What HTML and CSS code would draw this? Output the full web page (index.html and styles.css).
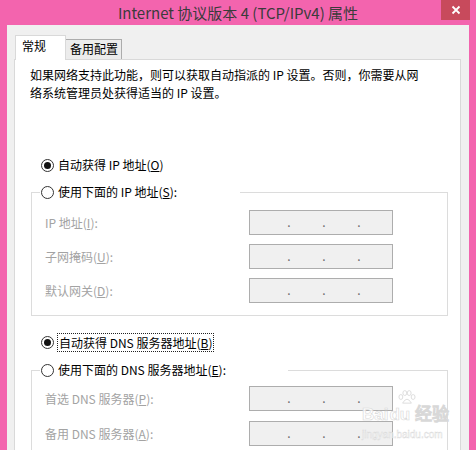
FILE: index.html
```html
<!DOCTYPE html>
<html lang="zh-CN">
<head>
    <meta charset="UTF-8">
    <title>Internet 协议版本 4 (TCP/IPv4) 属性</title>
    <link rel="stylesheet" href="styles.css">
</head>
<body>
    <div class="window">
        <!-- Title bar -->
        <div class="titlebar">
            <span class="title">Internet 协议版本 4 (TCP/IPv4) 属性</span>
            <button class="close" type="button">
                <svg width="10" height="10" viewBox="0 0 10 10">
                    <path d="M1.5 1.5 L8.5 8.5 M8.5 1.5 L1.5 8.5" stroke="#fff" stroke-width="1.8" fill="none"/>
                </svg>
            </button>
        </div>

        <div class="client">
            <!-- Tabs -->
            <div class="tabs">
                <div class="tab active">常规</div>
                <div class="tab">备用配置</div>
            </div>

            <div class="panel">
                <p class="intro">如果网络支持此功能，则可以获取自动指派的 IP 设置。否则，你需要从网<br>络系统管理员处获得适当的 IP 设置。</p>

                <!-- IP address -->
                <div class="radio-row auto-ip">
                    <span class="radio checked"></span>
                    <span>自动获得 IP 地址(<u>O</u>)</span>
                </div>
                <div class="group">
                    <div class="radio-row legend">
                        <span class="radio"></span>
                        <span>使用下面的 IP 地址(<u>S</u>):</span>
                    </div>
                    <div class="field-list">
                        <div class="field">
                            <span class="field-label">IP 地址(<u>I</u>):</span>
                            <div class="ip-box"><span class="octet first"></span><span class="ip-dot">.</span><span class="octet"></span><span class="ip-dot">.</span><span class="octet"></span><span class="ip-dot">.</span><span class="octet"></span></div>
                        </div>
                        <div class="field">
                            <span class="field-label">子网掩码(<u>U</u>):</span>
                            <div class="ip-box"><span class="octet first"></span><span class="ip-dot">.</span><span class="octet"></span><span class="ip-dot">.</span><span class="octet"></span><span class="ip-dot">.</span><span class="octet"></span></div>
                        </div>
                        <div class="field">
                            <span class="field-label">默认网关(<u>D</u>):</span>
                            <div class="ip-box"><span class="octet first"></span><span class="ip-dot">.</span><span class="octet"></span><span class="ip-dot">.</span><span class="octet"></span><span class="ip-dot">.</span><span class="octet"></span></div>
                        </div>
                    </div>
                </div>

                <!-- DNS -->
                <div class="radio-row auto-dns">
                    <span class="radio checked"></span>
                    <span class="focus">自动获得 DNS 服务器地址(<u>B</u>)</span>
                </div>
                <div class="group group-dns">
                    <div class="radio-row legend">
                        <span class="radio"></span>
                        <span>使用下面的 DNS 服务器地址(<u>E</u>):</span>
                    </div>
                    <div class="field-list">
                        <div class="field">
                            <span class="field-label">首选 DNS 服务器(<u>P</u>):</span>
                            <div class="ip-box"><span class="octet first"></span><span class="ip-dot">.</span><span class="octet"></span><span class="ip-dot">.</span><span class="octet"></span><span class="ip-dot">.</span><span class="octet"></span></div>
                        </div>
                        <div class="field">
                            <span class="field-label">备用 DNS 服务器(<u>A</u>):</span>
                            <div class="ip-box"><span class="octet first"></span><span class="ip-dot">.</span><span class="octet"></span><span class="ip-dot">.</span><span class="octet"></span><span class="ip-dot">.</span><span class="octet"></span></div>
                        </div>
                    </div>
                </div>
            </div>
        </div>

        <!-- Watermark -->
        <div class="watermark">
            <svg class="paw" width="22" height="14" viewBox="0 0 22 16">
                <g fill="none" stroke="#d9d9d9" stroke-width="1">
                    <ellipse cx="4" cy="8" rx="2.2" ry="2.8"/>
                    <ellipse cx="8.5" cy="3.5" rx="2.2" ry="2.8"/>
                    <ellipse cx="13.5" cy="3.5" rx="2.2" ry="2.8"/>
                    <ellipse cx="18" cy="8" rx="2.2" ry="2.8"/>
                    <path d="M6 15 Q11 6 16 15 Z"/>
                </g>
            </svg>
            <div class="wm-brand">Bai<span class="wm-du">du</span> 经验</div>
            <div class="wm-url">jingyan.baidu.com</div>
        </div>
    </div>
</body>
</html>
```

FILE: styles.css
```css
* {
    box-sizing: border-box;
    margin: 0;
    padding: 0;
}
body {
    width: 476px;
    height: 450px;
    overflow: hidden;
    font-family: "Noto Sans CJK SC", "Noto Sans", sans-serif;
    font-size: 12px;
    color: #000;
    background-color: #f364ae;
}
.window {
    position: relative;
    height: 450px;
    overflow: hidden;
    padding: 0 7px;
    background-color: #f364ae;
}
.titlebar {
    height: 25px;
    display: flex;
    align-items: center;
    justify-content: center;
}
.title {
    font-size: 15px;
    line-height: 25px;
    color: #3b3b3b;
}
.close {
    position: absolute;
    top: 0;
    right: 6px;
    width: 29px;
    height: 20px;
    border: none;
    background-color: #c84a5c;
    display: flex;
    align-items: center;
    justify-content: center;
}
.client {
    height: 425px;
    background-color: #f0f0f0;
    padding: 10px 8px 0 7px;
}
.tabs {
    display: flex;
    align-items: flex-end;
    height: 24px;
    margin-left: 1px;
}
.tab {
    height: 20px;
    line-height: 18px;
    padding: 0 3px 0 4px;
    margin-left: -1px;
    border: 1px solid #acacac;
    border-bottom: none;
    background-color: #ececec;
}
.tab.active {
    position: relative;
    z-index: 1;
    height: 25px;
    margin-left: 0;
    margin-bottom: -1px;
    padding: 1px 19px 0 6px;
    border-color: #d9d9d9;
    background-color: #fff;
}
.panel {
    background-color: #fff;
    border: 1px solid #d9d9d9;
    padding: 6px 0 60px 0;
}
.intro {
    margin-left: 15px;
    line-height: 18px;
    white-space: nowrap;
}
.radio-row {
    display: flex;
    align-items: center;
    gap: 4px;
    height: 18px;
    line-height: 18px;
}
.radio {
    position: relative;
    flex: none;
    width: 13px;
    height: 13px;
    border-radius: 50%;
    border: 1px solid #333;
    background-color: #fff;
}
.radio.checked::after {
    content: "";
    position: absolute;
    left: 2px;
    top: 2px;
    width: 7px;
    height: 7px;
    border-radius: 50%;
    background-color: #111;
}
.auto-ip {
    margin: 54px 0 0 26px;
}
.auto-dns {
    margin: 17px 0 0 26px;
}
.focus {
    outline: 1px dotted #222;
    padding: 0 1px;
    line-height: 17px;
}
.group {
    margin: 18px 12px 0 16px;
    border: 1px solid #dcdcdc;
    padding-bottom: 12px;
}
.group-dns {
    margin-top: 19px;
}
.legend {
    width: 200px;
    margin: -10px 0 0 8px;
    padding-left: 1px;
    background-color: #fff;
}
.group-dns .legend {
    width: 248px;
}
.field-list {
    display: flex;
    flex-direction: column;
    gap: 9px;
    margin-top: 9px;
    padding-left: 13px;
}
.group-dns .field-list {
    margin-top: 7px;
    gap: 10px;
}
.field {
    display: grid;
    grid-template-columns: 204px 144px;
    align-items: center;
    height: 25px;
}
.field-label {
    color: #a3a3a3;
}
.ip-box {
    display: flex;
    align-items: center;
    height: 25px;
    border: 1px solid #adadad;
    background-color: #f0f0f0;
}
.octet {
    width: 33px;
    flex: none;
}
.octet.first {
    width: 38px;
}
.ip-dot {
    width: 2px;
    flex: none;
    display: flex;
    justify-content: center;
    color: #6a6a6a;
    line-height: 12px;
    margin-top: -2px;
}
.watermark {
    position: absolute;
    left: 362px;
    top: 390px;
    width: 90px;
    color: rgba(255, 255, 255, 0.8);
    font-family: "Liberation Sans", Arial, sans-serif;
    pointer-events: none;
}
.paw {
    display: block;
    margin-left: 34px;
}
.wm-brand {
    font-size: 17px;
    font-weight: bold;
    line-height: 21px;
    -webkit-text-stroke: 0.6px #d8d8d8;
    white-space: nowrap;
}
.wm-brand .wm-du {
    margin-left: 1px;
}
.wm-url {
    margin-top: 4px;
    font-size: 10px;
    line-height: 12px;
    -webkit-text-stroke: 0.4px #d8d8d8;
}
```
